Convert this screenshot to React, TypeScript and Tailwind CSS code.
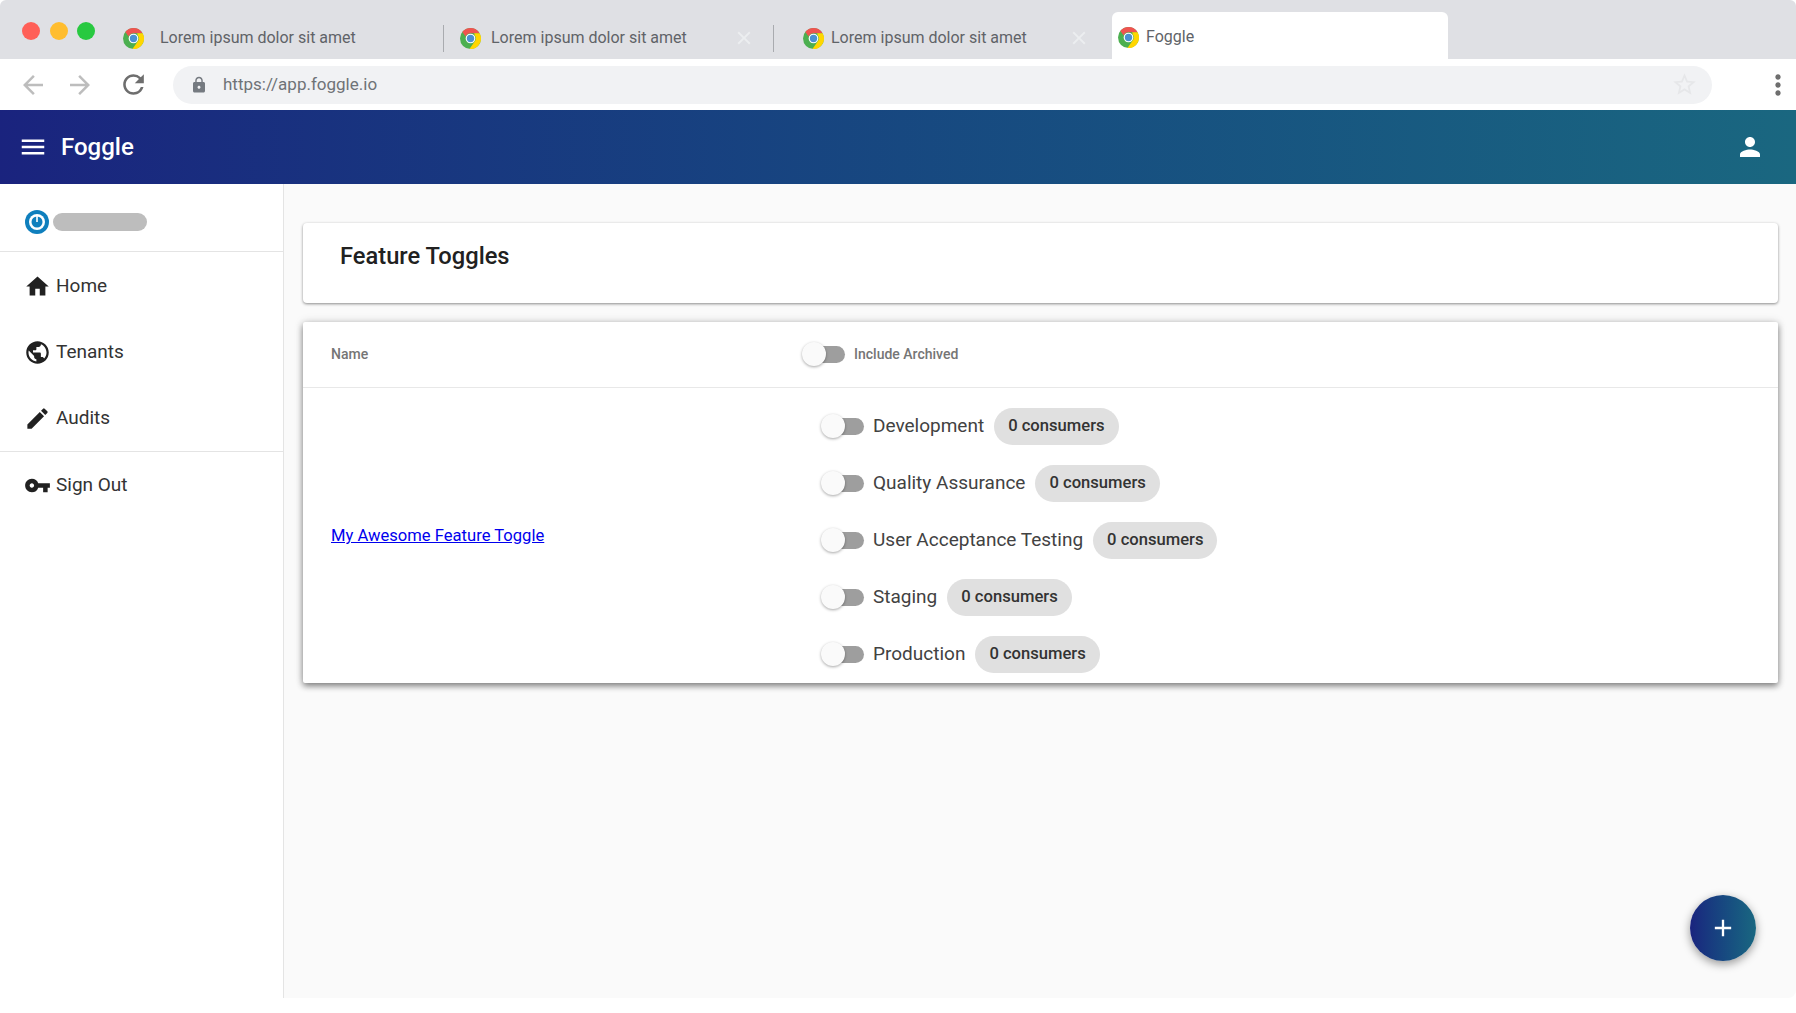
import {
  MdAdd,
  MdArrowBack,
  MdArrowForward,
  MdClose,
  MdEdit,
  MdHome,
  MdLock,
  MdMenu,
  MdMoreVert,
  MdPerson,
  MdPublic,
  MdRefresh,
  MdStarBorder,
  MdVpnKey,
} from 'react-icons/md'

const ChromeIcon = () => (
  <svg viewBox="0 0 20 20" className="h-[21px] w-[21px] shrink-0">
    <circle cx="10" cy="10" r="10" fill="#4caf50" />
    <path d="M10 0a10 10 0 0 1 8.66 5H10a5 5 0 0 0-4.6 3L2.2 3.8A10 10 0 0 1 10 0z" fill="#ef5350" />
    <path d="M18.66 5A10 10 0 0 1 9 19.95L13.5 13.5A5 5 0 0 0 14 7l-.5-2z" fill="#ffd600" />
    <circle cx="10" cy="10" r="4.6" fill="#fff" />
    <circle cx="10" cy="10" r="3.5" fill="#4a90d2" />
  </svg>
)

const Toggle = () => (
  <div className="relative h-[17px] w-[43px] shrink-0">
    <div className="absolute right-0 top-0 h-[17px] w-[34px] rounded-full bg-[#9e9e9e]" />
    <div className="absolute -top-[4px] left-0 h-[24px] w-[24px] rounded-full bg-[#fafafa] shadow-[0_1px_3px_rgba(0,0,0,0.35)]" />
  </div>
)

const environments = ['Development', 'Quality Assurance', 'User Acceptance Testing', 'Staging', 'Production']

const navItems = [
  { label: 'Home', icon: MdHome },
  { label: 'Tenants', icon: MdPublic },
  { label: 'Audits', icon: MdEdit },
]

const Tab = ({ className, gap, close, sep }: { className: string; gap: string; close?: boolean; sep?: boolean }) => (
  <div className={`flex h-[32px] items-center ${className}`}>
    <ChromeIcon />
    <span className={`whitespace-nowrap text-[16px] text-[#5f6368] ${gap}`}>Lorem ipsum dolor sit amet</span>
    {close && <MdClose className="ml-auto text-[22px] text-[#eceef0]" />}
    {sep && <div className={`h-[27px] w-px bg-[#a9abaf] ${close ? 'ml-[18px]' : 'ml-auto'}`} />}
  </div>
)

export default function App() {
  return (
    <div className="flex h-[1013px] w-[1796px] flex-col overflow-hidden bg-white font-['Roboto',sans-serif]">
      {/* Browser tabs */}
      <div className="flex h-[59px] shrink-0 items-end rounded-t-[6px] bg-[#dfe0e4] pb-[5px] pl-[22px]">
        <div className="mb-[14px] mr-[28px] flex gap-[9.5px] self-end">
          <span className="h-[18px] w-[18px] rounded-full bg-[#ff5f57]" />
          <span className="h-[18px] w-[18px] rounded-full bg-[#ffbd2e]" />
          <span className="h-[18px] w-[18px] rounded-full bg-[#28c940]" />
        </div>
        <div className="flex items-center">
          <Tab className="w-[321px]" gap="ml-[16px]" sep />
          <Tab className="w-[330px] pl-[16px]" gap="ml-[10px]" close sep />
          <Tab className="w-[338px] pl-[29px] pr-[22px]" gap="ml-[7px]" close />
        </div>
        <div className="-mb-[5px] flex h-[47px] w-[336px] items-center rounded-t-[6px] bg-white pl-[6px] pt-[3px]">
          <ChromeIcon />
          <span className="ml-[7px] text-[16px] text-[#5f6368]">Foggle</span>
        </div>
      </div>

      {/* Address bar */}
      <div className="flex h-[51px] shrink-0 items-center bg-white pl-[18px] pr-[2px]">
        <MdArrowBack className="text-[30px] text-[#bdbdbd]" />
        <MdArrowForward className="ml-[17px] text-[30px] text-[#bdbdbd]" />
        <MdRefresh className="ml-[23px] text-[31px] text-[#6e6e6e]" />
        <div className="ml-[24px] flex h-[38px] w-[1539px] items-center rounded-full bg-[#f1f2f4] pl-[17px] pr-[14px]">
          <MdLock className="text-[18px] text-[#757a80]" />
          <span className="ml-[15px] text-[17px] text-[#6f7377]">https://app.foggle.io</span>
          <MdStarBorder className="ml-auto text-[27px] text-[#e6e7e9]" />
        </div>
        <MdMoreVert className="ml-auto text-[32px] text-[#6e6e6e]" />
      </div>

      {/* App bar */}
      <header className="flex h-[74px] shrink-0 items-center bg-gradient-to-r from-[#1a237e] to-[#1a6780] pl-[18px] pr-[31px] text-white">
        <MdMenu className="text-[30px]" />
        <span className="ml-[13px] text-[24px] font-medium">Foggle</span>
        <MdPerson className="ml-auto text-[30px]" />
      </header>

      <div className="relative flex h-[814px] shrink-0 flex-col">
        <div className="flex h-[814px] items-stretch">
          {/* Sidebar */}
          <aside className="w-[284px] shrink-0 border-r border-[#e4e4e4] bg-white text-[#333]">
            <div className="flex h-[68px] items-center border-b border-[#e4e4e4] pl-[25px] pt-[8px]">
              <svg viewBox="0 0 24 24" className="h-[24px] w-[24px]" fill="none">
                <circle cx="12" cy="12" r="12" fill="#0f7fbd" />
                <circle cx="12" cy="12" r="8" fill="#fff" />
                <circle cx="12" cy="12" r="5.5" fill="#0f7fbd" />
                <path d="M12 5.5v6.5" stroke="#fff" strokeWidth="1.6" />
              </svg>
              <div className="ml-[4px] h-[18px] w-[94px] rounded-[9px] bg-[#bdbdbd]" />
            </div>
            <nav className="border-b border-[#e4e4e4] pt-[1px]">
              {navItems.map(({ label, icon: Icon }) => (
                <div key={label} className="flex h-[66px] items-center pl-[24px] text-[19px]">
                  <Icon className="text-[27px] text-[#212121]" />
                  <span className="ml-[5px]">{label}</span>
                </div>
              ))}
            </nav>
            <div className="flex h-[66px] items-center pl-[24px] text-[19px]">
              <MdVpnKey className="text-[27px] text-[#212121]" />
              <span className="ml-[5px]">Sign Out</span>
            </div>
          </aside>

          {/* Content */}
          <main className="flex-1 rounded-br-[8px] bg-[#fafafa] pb-[16px] pl-[19px] pr-[18px] pt-[39px]">
            <div className="flex h-[80px] items-start rounded-[4px] bg-white pl-[37px] pt-[17px] shadow-[0_1px_3px_rgba(0,0,0,0.45)]">
              <h1 className="text-[23.7px] font-medium leading-[32px] text-[#212121]">Feature Toggles</h1>
            </div>

            <div className="mt-[19px] rounded-[2px] bg-white shadow-[0_3px_6px_rgba(0,0,0,0.45),0_0_10px_rgba(0,0,0,0.15)]">
              <div className="flex h-[66px] items-center border-b border-[#e8e8e8]">
                <div className="w-[499px] pl-[28px] text-[14px] font-medium text-[#757575]">Name</div>
                <Toggle />
                <span className="ml-[9px] text-[14px] font-medium text-[#757575]">Include Archived</span>
              </div>
              <div className="flex h-[295px] items-center">
                <div className="w-[518px] shrink-0 pl-[28px] pt-[2px]">
                  <a href="#" className="text-[16.6px] text-[#0000ee] underline">My Awesome Feature Toggle</a>
                </div>
                <div className="flex flex-col gap-[20px] pt-[10px]">
                  {environments.map((name) => (
                    <div key={name} className="flex h-[37px] items-center">
                      <Toggle />
                      <span className="ml-[9px] text-[19px] text-[#424242]">{name}</span>
                      <span className="ml-[10px] flex h-[37px] items-center rounded-full bg-[#e0e0e0] px-[14px] text-[16.6px] font-medium text-[#333]">
                        0 consumers
                      </span>
                    </div>
                  ))}
                </div>
              </div>
            </div>
          </main>
        </div>

        {/* FAB */}
        <button className="absolute bottom-[37px] right-[40px] flex h-[66px] w-[66px] items-center justify-center rounded-full bg-gradient-to-r from-[#1a237e] to-[#1a6780] text-white shadow-[0_3px_10px_rgba(0,0,0,0.4)]">
          <MdAdd className="text-[28px]" />
        </button>
      </div>
    </div>
  )
}
